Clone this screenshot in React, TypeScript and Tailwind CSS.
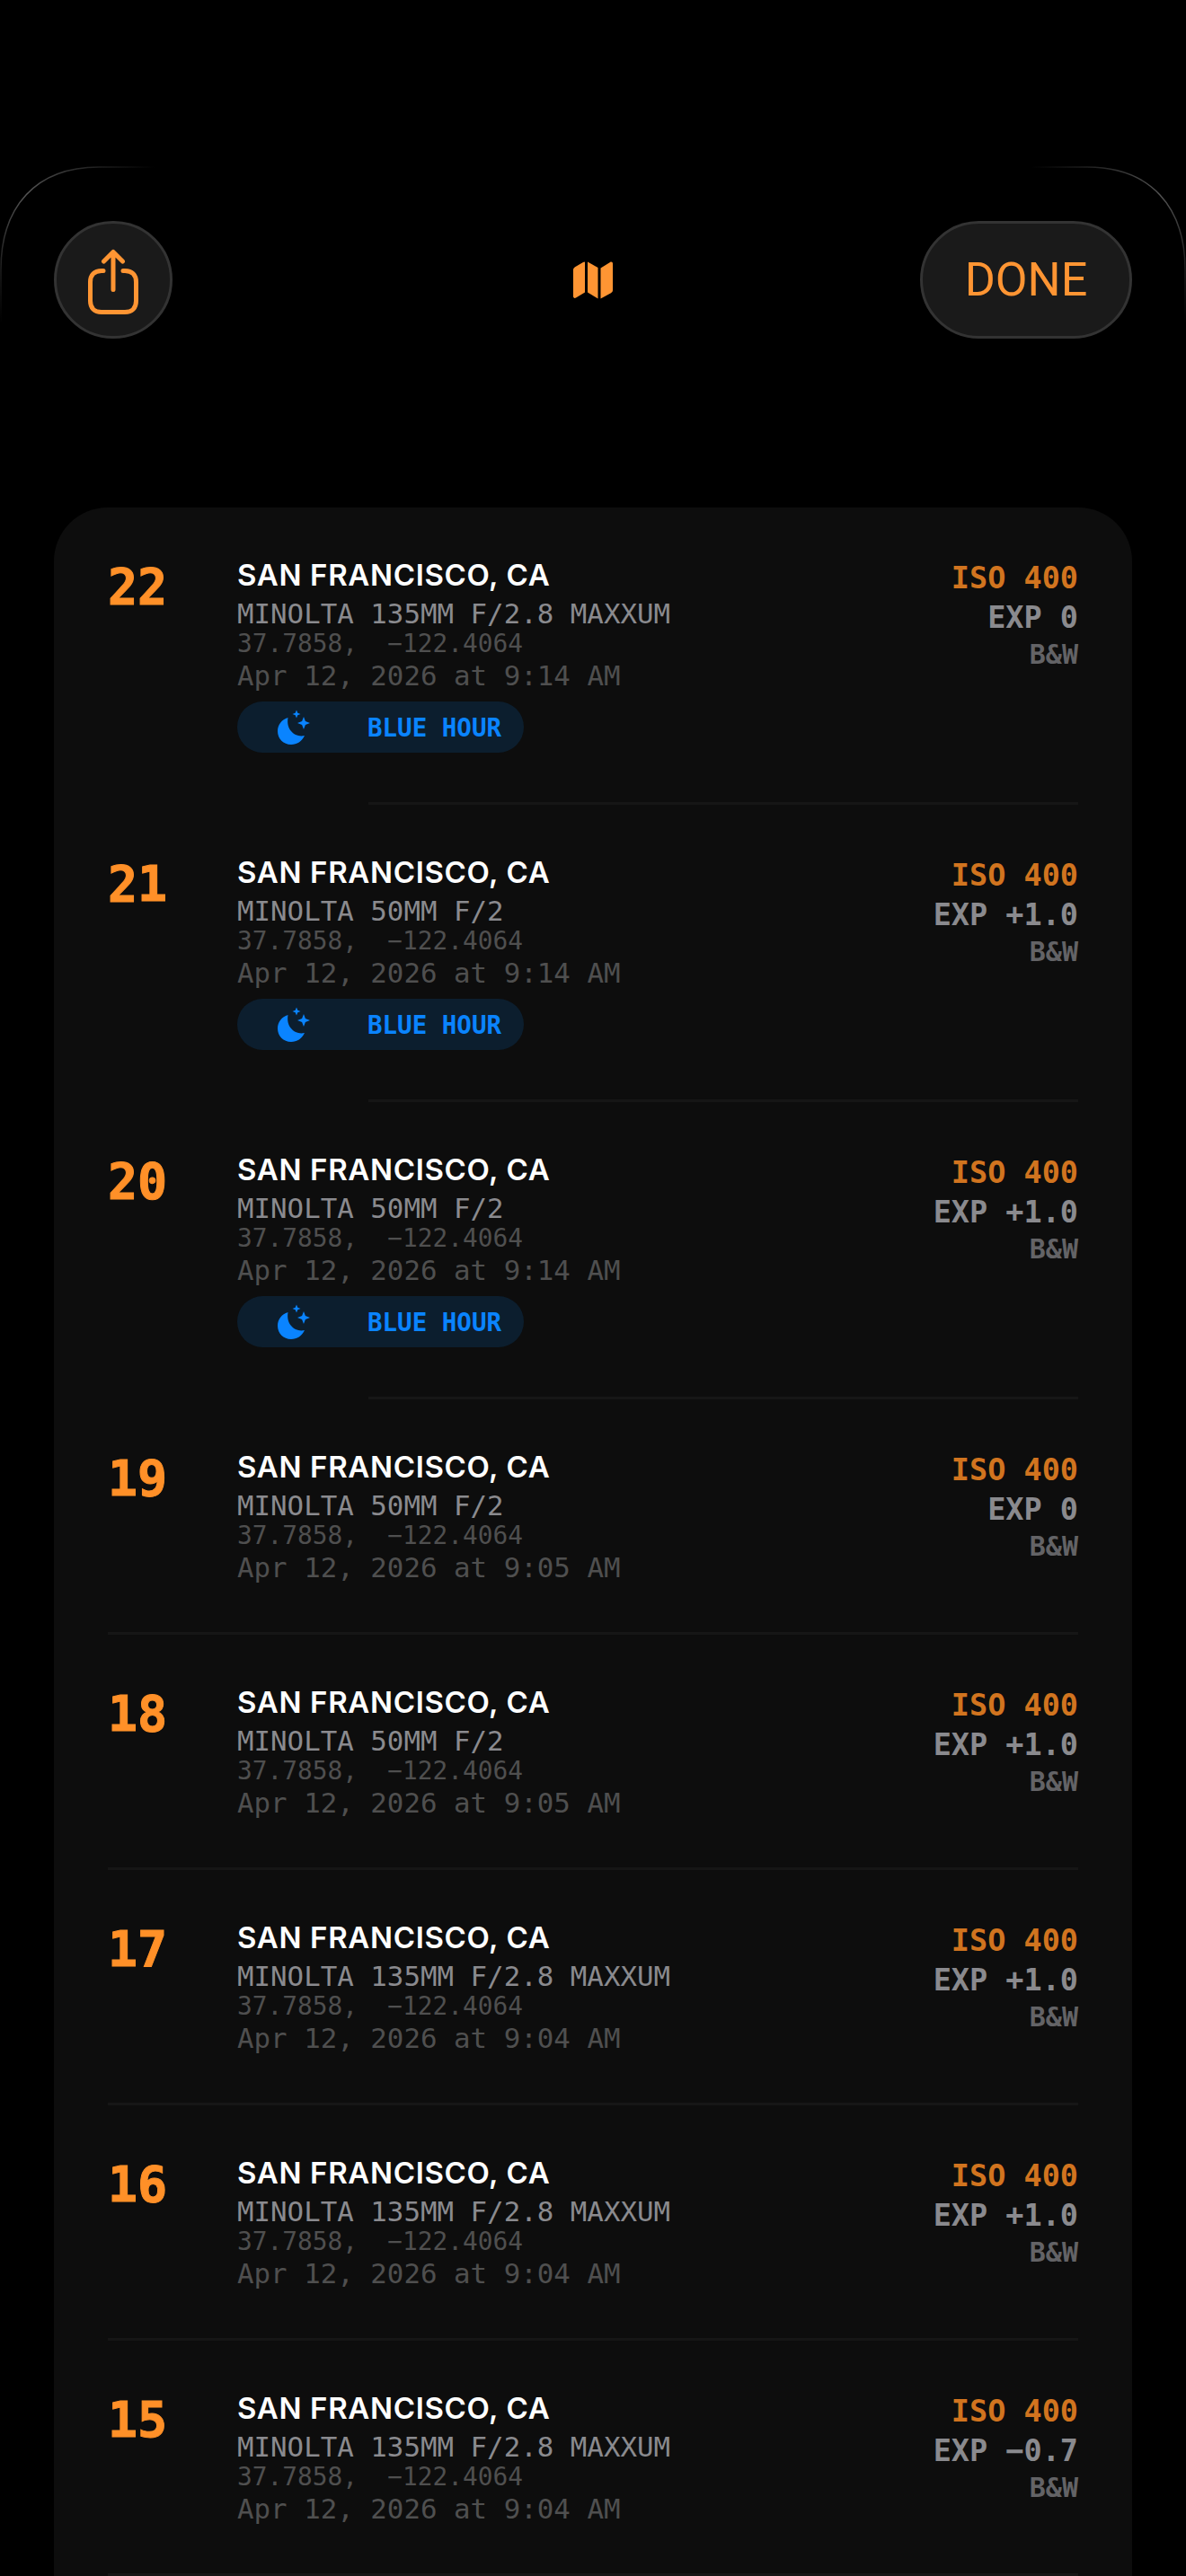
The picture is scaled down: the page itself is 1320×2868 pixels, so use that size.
const rows = [
  { n: '22', lens: 'MINOLTA 135MM F/2.8 MAXXUM', time: '9:14', exp: '0', blue: true },
  { n: '21', lens: 'MINOLTA 50MM F/2', time: '9:14', exp: '+1.0', blue: true },
  { n: '20', lens: 'MINOLTA 50MM F/2', time: '9:14', exp: '+1.0', blue: true },
  { n: '19', lens: 'MINOLTA 50MM F/2', time: '9:05', exp: '0', blue: false },
  { n: '18', lens: 'MINOLTA 50MM F/2', time: '9:05', exp: '+1.0', blue: false },
  { n: '17', lens: 'MINOLTA 135MM F/2.8 MAXXUM', time: '9:04', exp: '+1.0', blue: false },
  { n: '16', lens: 'MINOLTA 135MM F/2.8 MAXXUM', time: '9:04', exp: '+1.0', blue: false },
  { n: '15', lens: 'MINOLTA 135MM F/2.8 MAXXUM', time: '9:04', exp: '−0.7', blue: false },
]

function ShareIcon() {
  return (
    <svg width="60" height="76" viewBox="0 0 60 76" fill="none" stroke="#ff9533" strokeWidth="5" strokeLinecap="round" strokeLinejoin="round">
      <path d="M19 24.500H17C9 24.500 4.500 29 4.500 37V58C4.500 66 9 70.500 17 70.500H43C51 70.500 55.500 66 55.500 58V37C55.500 29 51 24.500 43 24.500H41" />
      <path d="M30 45.500V3.500M19.500 14L30 3.500L40.500 14" />
    </svg>
  )
}

function MapIcon() {
  return (
    <svg width="44" height="42" viewBox="0 0 44 42" fill="#ff9533">
      <path d="M13 1V34.500L3 40.500C1.500 41.500 0 40.500 0 39V9.500C0 8 .8 7 2 6.200L11 1C12 .2 13 .2 13 1Z" />
      <path d="M16 .5L27.500 7V41.500L16 34.500Z" />
      <path d="M30.500 7.500L41 1C42.500 0 44 .8 44 2.500V32C44 33.500 43.200 34.500 42 35.200L30.500 41.500Z" />
    </svg>
  )
}

function MoonIcon() {
  return (
    <svg width="38" height="40" viewBox="0 0 38 40" fill="#0a84ff">
      <path d="M12.500 9C5.500 11 1 17 1 24C1 32.500 7.500 39 16 39C22.500 39 28 35.500 31 29C21 31.500 10 23 12.500 9Z" />
      <path d="M22 .5L23.300 3.700L26.500 5L23.300 6.300L22 9.500L20.700 6.300L17.500 5L20.700 3.700Z" />
      <path d="M30 8L31.900 13.100L37 15L31.900 16.900L30 22L28.100 16.900L23 15L28.100 13.100Z" />
    </svg>
  )
}

function Row({ n, lens, time, exp, blue }: (typeof rows)[number]) {
  return (
    <div className={`relative flex px-[60px] pt-[54px] ${blue ? 'h-[331px]' : 'h-[262px]'}`}>
      <div className="w-[144px] shrink-0 pt-[9px] text-[55px] font-bold leading-[50px] text-[#ff9028] [-webkit-text-stroke:1px_#ff9028]">{n}</div>
      <div className="flex-1">
        <div className="font-['Inter',sans-serif] text-[33px] font-semibold leading-[43px] tracking-[0.65px] text-white">SAN FRANCISCO, CA</div>
        <div className="text-[30.8px] leading-[42px] text-[#8a8a8e]">{lens}</div>
        <div className="text-[27.8px] leading-[26px] text-[#4f4f4f]">37.7858,  −122.4064</div>
        <div className="text-[30.8px] leading-[44px] text-[#4f4f4f]">Apr 12, 2026 at {time} AM</div>
        {blue && (
          <div className="mt-[7px] flex h-[57px] w-[319px] items-center rounded-full bg-[#0c1e2e] pl-[44px] text-[#0a84ff]">
            <MoonIcon />
            <span className="ml-[63px] pt-[2px] text-[27.5px] font-bold">BLUE HOUR</span>
          </div>
        )}
      </div>
      <div className="flex flex-col items-end pt-[3px]">
        <div className="text-[33.5px] font-bold leading-[44px] text-[#d1741f]">ISO 400</div>
        <div className="text-[33.5px] font-bold leading-[44px] text-[#8a8a8e]">EXP {exp}</div>
        <div className="text-[30px] font-bold leading-[38px] text-[#636366]">B&amp;W</div>
      </div>
      <div className={`absolute bottom-0 right-[60px] h-[3px] bg-[#161616] ${blue ? 'left-[350px]' : 'left-[60px]'}`} />
    </div>
  )
}

export default function App() {
  return (
    <div className="relative h-[2868px] overflow-hidden bg-black font-['DejaVu_Sans_Mono',monospace] whitespace-pre">
      {/* faint sheet outline behind the toolbar */}
      <svg className="absolute left-0 top-[180px]" width="1320" height="200" fill="none" strokeWidth="1.500">
        <defs>
          <linearGradient id="fadeL" x1="0" y1="1" x2="1" y2="0">
            <stop offset="0" stopColor="#555" stopOpacity="0" />
            <stop offset="0.5" stopColor="#555" />
            <stop offset="1" stopColor="#555" stopOpacity="0" />
          </linearGradient>
          <linearGradient id="fadeR" x1="1" y1="1" x2="0" y2="0">
            <stop offset="0" stopColor="#555" stopOpacity="0" />
            <stop offset="0.5" stopColor="#555" />
            <stop offset="1" stopColor="#555" stopOpacity="0" />
          </linearGradient>
        </defs>
        <path stroke="url(#fadeL)" d="M1 180V120C1 50 40 6 110 6H172" />
        <path stroke="url(#fadeR)" d="M1319 180V120C1319 50 1280 6 1210 6H1148" />
      </svg>

      <div className="relative flex items-center px-[60px] pt-[246px]">
        <div className="flex flex-1">
          <button className="flex h-[131px] w-[132px] items-center justify-center rounded-full border-[3px] border-[#333] bg-[#1a1a1a] pt-[6px]">
            <ShareIcon />
          </button>
        </div>
        <MapIcon />
        <div className="flex flex-1 justify-end">
          <button className="flex h-[131px] w-[236px] items-center justify-center rounded-full border-[3px] border-[#333] bg-[#1a1a1a] font-['Roboto',sans-serif] text-[52px] text-[#ff9533]">
            DONE
          </button>
        </div>
      </div>

      <div className="mx-[60px] mt-[188px] rounded-t-[60px] bg-[#0d0d0d]">
        {rows.map((r) => (
          <Row key={r.n} {...r} />
        ))}
      </div>
    </div>
  )
}
